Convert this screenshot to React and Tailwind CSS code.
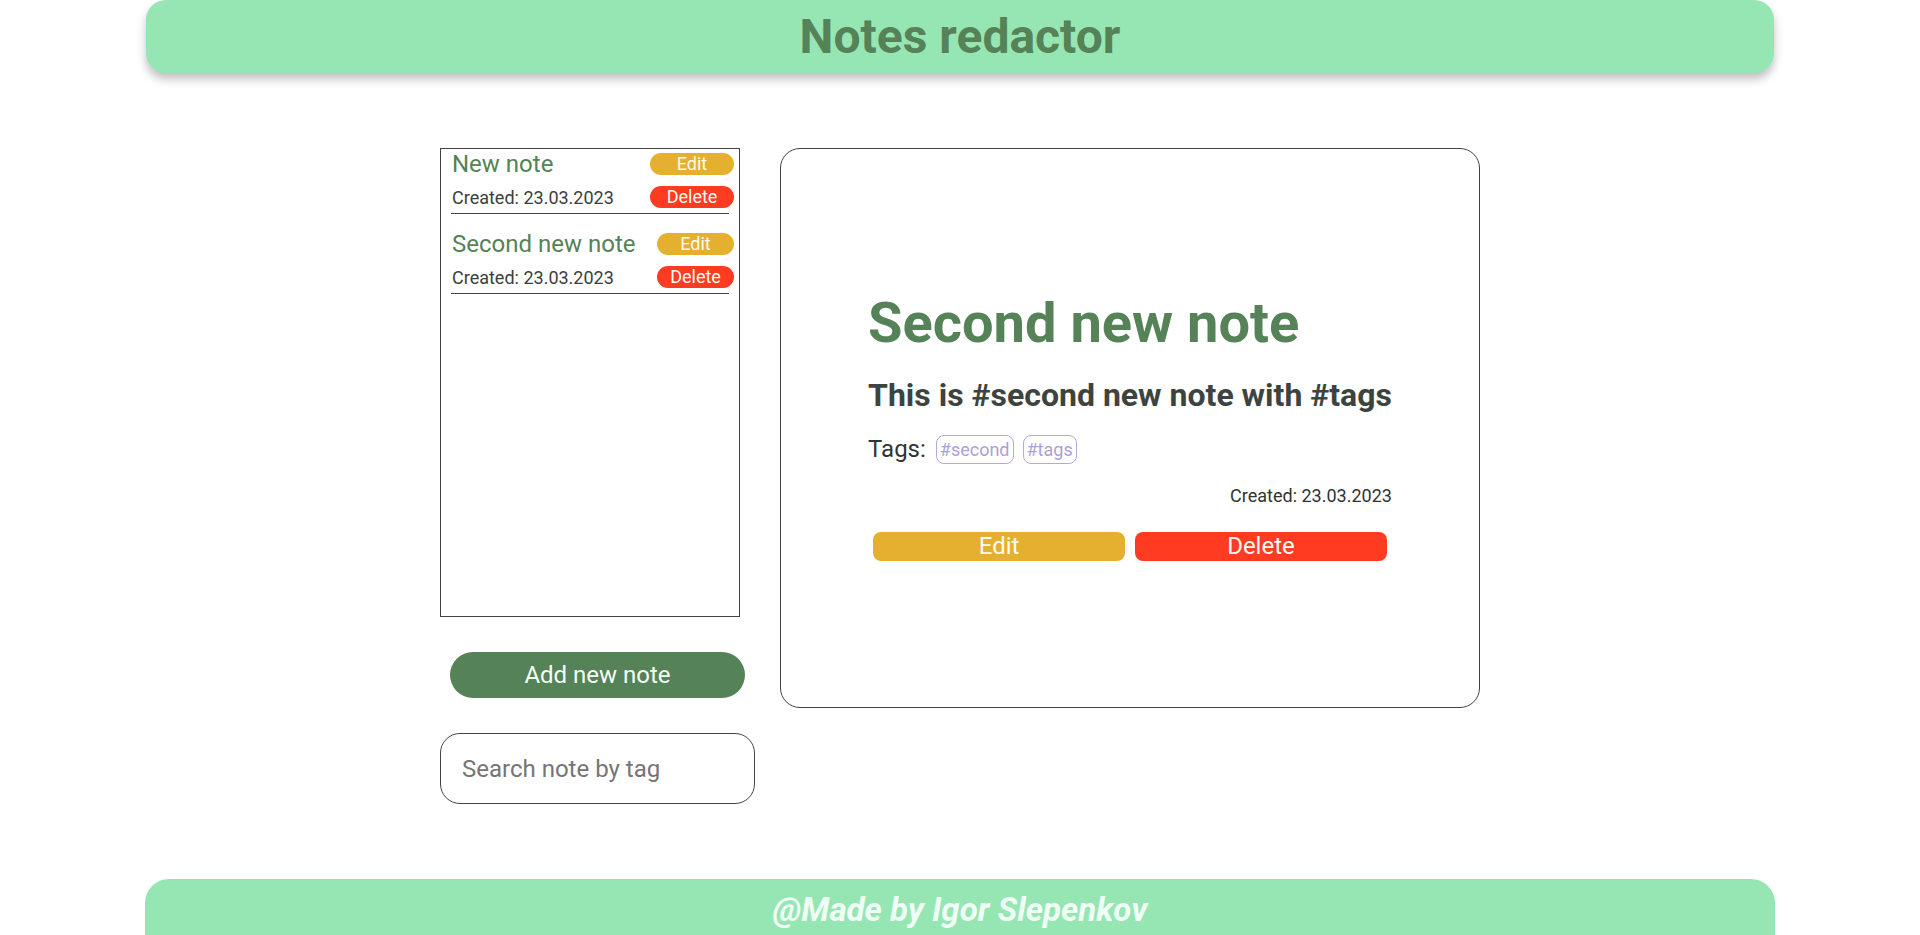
import React, { useState } from "react";

// Notes redactor: list of notes on the left, selected note on the right

const notes = [
  { id: 1, title: "New note", created: "23.03.2023", body: "This is new note", tags: [], btnW: "w-[84px]" },
  {
    id: 2,
    title: "Second new note",
    created: "23.03.2023",
    body: "This is #second new note with #tags",
    tags: ["#second", "#tags"],
    btnW: "w-[77px]",
  },
];

function NoteItem({ note, onSelect }) {
  return (
    <div className="flex flex-col first:mt-0 mt-[16px]" onClick={() => onSelect(note.id)}>
      <div className="flex items-center justify-between h-[28px] pl-[11px] pr-[5px]">
        <span className="text-[24px] leading-[28px] text-[#558257] whitespace-nowrap">{note.title}</span>
        <button className={`${note.btnW} h-[22px] rounded-full bg-[#e5b02f] text-[#fbfbf0] text-[18px] leading-[22px]`}>
          Edit
        </button>
      </div>
      <div className="flex items-center justify-between h-[22px] mt-[8px] pl-[11px] pr-[5px]">
        <span className="text-[18px] leading-[21px] text-[#3a3f3c] whitespace-nowrap">Created: {note.created}</span>
        <button className={`${note.btnW} h-[22px] rounded-full bg-[#ff3b22] text-[#fbfbf0] text-[18px] leading-[22px]`}>
          Delete
        </button>
      </div>
      <div className="mt-[5px] mx-[10px] h-px bg-[#444]" />
    </div>
  );
}

export default function App() {
  const [selected, setSelected] = useState(2);
  const [search, setSearch] = useState("");
  const note = notes.find((n) => n.id === selected);

  return (
    <div className="min-h-screen bg-white font-['Roboto',sans-serif]">
      {/* header */}
      <header className="w-[1628px] mx-auto h-[73px] rounded-[20px] bg-[#96e6b4] shadow-[0_6px_10px_rgba(0,0,0,0.25)] flex items-center justify-center">
        <h1 className="text-[48px] font-bold text-[#568258] leading-[56px]">Notes redactor</h1>
      </header>

      <main className="mt-[75px] flex justify-center">
        {/* left column */}
        <div className="w-[315px] flex flex-col">
          <div className="w-[300px] h-[469px] border border-[#444] pt-[1px]">
            {notes.map((n) => (
              <NoteItem key={n.id} note={n} onSelect={setSelected} />
            ))}
          </div>
          <button className="mt-[35px] ml-[10px] w-[295px] h-[46px] rounded-full bg-[#558257] text-[#f2fff8] text-[24px]">
            Add new note
          </button>
          <input
            value={search}
            onChange={(e) => setSearch(e.target.value)}
            placeholder="Search note by tag"
            className="mt-[35px] w-[315px] h-[71px] rounded-[20px] border border-[#444] px-[21px] text-[24px] text-[#333] placeholder:text-[#757575] outline-none"
          />
        </div>

        {/* selected note */}
        <div className="ml-[25px] w-[700px] h-[560px] border border-[#444] rounded-[20px] flex items-center justify-center pb-[5px]">
          <div className="flex flex-col w-max">
            <h2 className="text-[56px] font-bold leading-[66px] text-[#558257]">{note.title}</h2>
            <h3 className="mt-[20px] text-[32px] font-bold leading-[38px] text-[#3d4440]">{note.body}</h3>
            <div className="mt-[21px] flex items-start h-[29px]">
              <span className="text-[24px] leading-[28px] text-[#333]">Tags:</span>
              {note.tags.map((t, i) => (
                <span
                  key={t}
                  className={`${i === 0 ? "ml-[10px]" : "ml-[9px]"} h-[29px] px-[3px] border border-[#b6a7de] rounded-[8px] text-[18px] leading-[27px] text-[#ae9fd6]`}
                >
                  {t}
                </span>
              ))}
            </div>
            <div className="mt-[21px] self-end text-[18px] leading-[21px] text-[#333]">Created: {note.created}</div>
            <div className="mt-[26px] flex gap-[10px] px-[5px]">
              <button className="flex-1 h-[29px] rounded-[8px] bg-[#e5b02f] text-[#fbfbf0] text-[24px] leading-[29px]">Edit</button>
              <button className="flex-1 h-[29px] rounded-[8px] bg-[#ff3b22] text-[#fbfbf0] text-[24px] leading-[29px]">Delete</button>
            </div>
          </div>
        </div>
      </main>

      {/* footer */}
      <footer className="mt-[75px] w-[1630px] mx-auto h-[70px] rounded-t-[24px] bg-[#96e6b4] pt-[11px] text-center">
        <span className="text-[33px] leading-[39px] font-bold italic text-[#f0fff6]">@Made by Igor Slepenkov</span>
      </footer>
    </div>
  );
}
